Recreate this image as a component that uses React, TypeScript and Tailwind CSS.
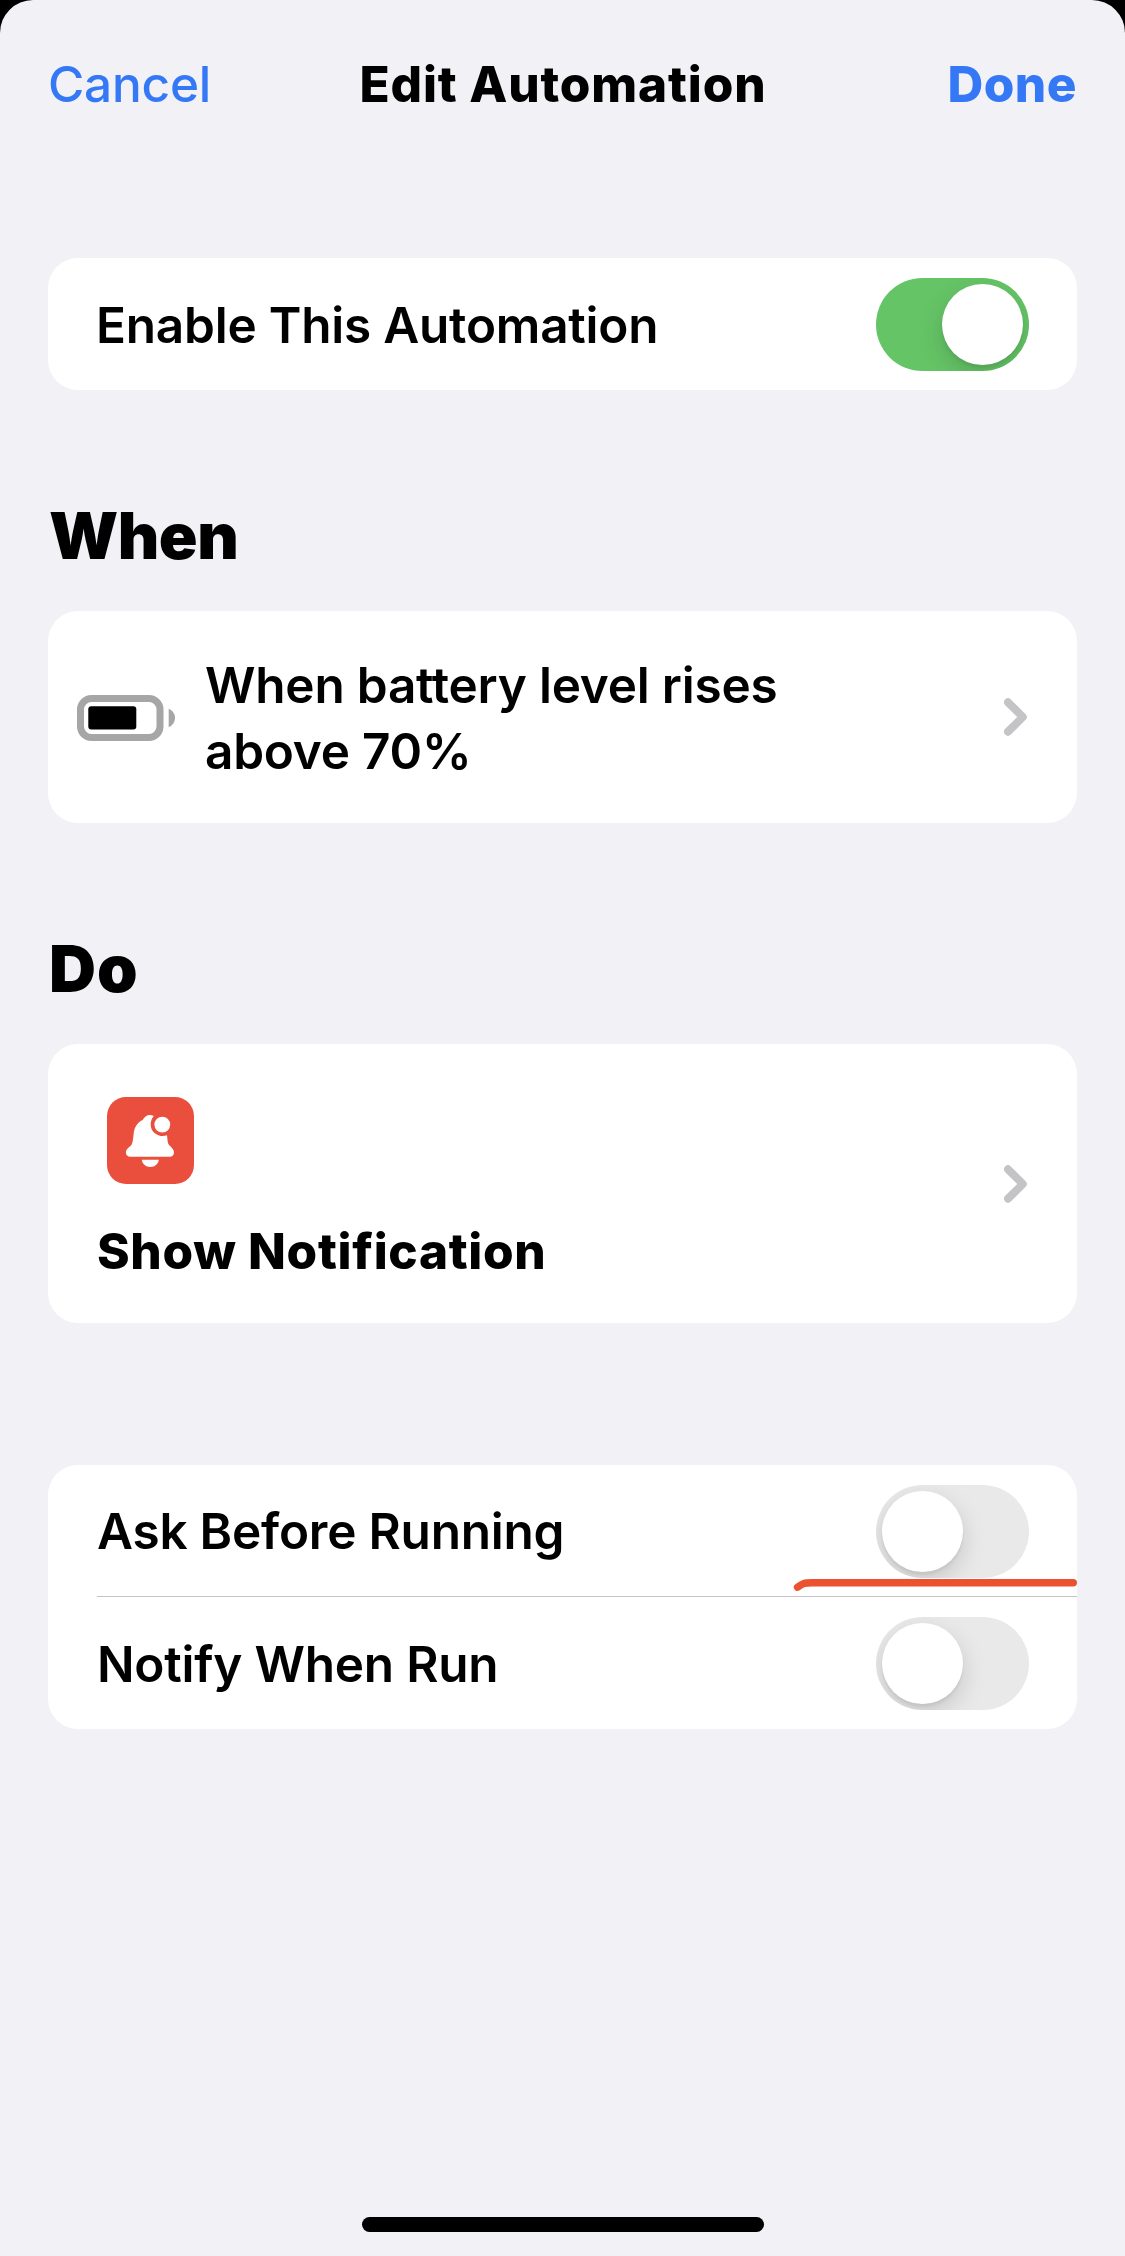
import type { ReactNode } from "react";

function Toggle({ on = false }: { on?: boolean }) {
  return (
    <div
      className={
        on
          ? "flex h-[93px] w-[153px] shrink-0 justify-end overflow-hidden rounded-full bg-[#65c466] p-[6px]"
          : "flex h-[93px] w-[153px] shrink-0 justify-start overflow-hidden rounded-full bg-[#e9e9ea] p-[6px]"
      }
    >
      <div className="size-[81px] rounded-full bg-white shadow-[0_9px_24px_rgba(0,0,0,0.15),0_3px_3px_rgba(0,0,0,0.06)]" />
    </div>
  );
}

function Chevron() {
  return (
    <svg className="h-[40px] w-[25px] shrink-0" viewBox="0 0 25 40" fill="none">
      <path d="M4 5.3 18.800 20 4 34.700" stroke="#c4c4c6" strokeWidth="8" strokeLinecap="round" strokeLinejoin="round" />
    </svg>
  );
}

function Card({ className, children }: { className: string; children: ReactNode }) {
  return <div className={`rounded-[30px] bg-white ${className}`}>{children}</div>;
}

function BatteryIcon() {
  return (
    <svg className="mt-[2px] h-[48px] w-[99px] shrink-0" viewBox="0 0 99 48">
      <rect x="3.5" y="4.5" width="79.5" height="39" rx="11" fill="none" stroke="#a6a6a6" strokeWidth="7" />
      <rect x="11.3" y="12.2" width="48" height="23.4" rx="3" fill="#000" />
      <path d="M91.7 14.8c3.8 1.6 6.300 5.300 6.300 9.200s-2.500 7.600-6.300 9.200z" fill="#a6a6a6" />
    </svg>
  );
}

function NotificationIcon() {
  return (
    <svg className="size-[87px]" viewBox="0 0 87 87">
      <rect width="87" height="87" rx="19" fill="#ea4f3d" />
      <path
        d="M46.800 18.900C45.500 18.300 44.200 18 42.900 18c-3.200 0-5.700 2-7.300 5.100-5.300 2.500-8.100 7-8.900 13.100-.5 4-.5 8.400-2.200 11.600-1.800 2.600-5.600 4-5.600 7.800 0 2.400 1.700 4.200 4.400 4.200h39.300c2.700 0 4.400-1.800 4.400-4.200 0-3.800-3.600-5.800-5.500-8.300-1.100-2.300-1-5.600-1.500-9.100-6.500 2.600-16.300-1.500-16.300-10.800 0-3.200 1.200-6.400 3.100-8.500z"
        fill="#fff"
      />
      <circle cx="55.300" cy="27.600" r="7.900" fill="#fff" />
      <path d="M34.800 62.800h17c-.3 4-3.900 7.200-8.500 7.200s-8.200-3.200-8.500-7.200z" fill="#fff" />
    </svg>
  );
}

export default function App() {
  return (
    <div className="h-[2256px] w-[1125px] bg-black">
      <div className="flex h-full flex-col rounded-t-[33px] bg-[#f1f1f6] px-[48px] font-[Inter,sans-serif] text-[49.5px] font-[570] tracking-[-0.22px] text-black">
        <header className="grid h-[168px] grid-cols-[1fr_auto_1fr] items-center">
          <button className="justify-self-start font-[540] text-[#3478f6]">Cancel</button>
          <h1 className="pl-[1px] font-[850] tracking-[0.85px]">Edit Automation</h1>
          <button className="justify-self-end font-[850] tracking-[0.5px] text-[#3478f6]">Done</button>
        </header>

        <Card className="mt-[90px] flex h-[132px] items-center justify-between px-[48px] pt-[1px]">
          <span className="pt-[1px]">Enable This Automation</span>
          <Toggle on />
        </Card>

        <h2 className="mt-[106px] h-[80px] pl-[1px] text-[64px] leading-[80px] font-black tracking-[-0.5px]">When</h2>
        <Card className="mt-[35px] flex h-[212px] items-center pr-[48px] pl-[29px]">
          <BatteryIcon />
          <span className="ml-[29px] w-[640px] pt-[2px] leading-[66px]">When battery level rises above 70%</span>
          <div className="ml-auto flex">
            <Chevron />
          </div>
        </Card>

        <h2 className="mt-[106px] h-[80px] pl-[1px] text-[65px] leading-[80px] font-black tracking-[1px]">Do</h2>
        <Card className="mt-[35px] flex h-[279px] items-center justify-between px-[48px]">
          <div className="flex h-full flex-col pt-[53px]">
            <div className="pl-[11px]">
              <NotificationIcon />
            </div>
            <span className="mt-[34px] pl-[1px] leading-[66px] font-[850] tracking-[0.66px]">Show Notification</span>
          </div>
          <Chevron />
        </Card>

        <Card className="relative mt-[142px] flex h-[264px] flex-col pl-[49px]">
          <div className="flex h-[132px] items-center justify-between border-b border-[#c4c4c6] pt-[2px] pr-[48px]">
            <span>Ask Before Running</span>
            <Toggle />
          </div>
          <div className="flex h-[132px] items-center justify-between pt-[1px] pr-[48px]">
            <span className="pt-[1px]">Notify When Run</span>
            <Toggle />
          </div>
          <svg className="absolute top-[106px] right-0 h-[24px] w-[290px]" viewBox="0 0 290 24" fill="none">
            <path d="M10.500 16.200C16 12.500 17 11.800 25 11.800H286.300" stroke="#ec5130" strokeWidth="7.400" strokeLinecap="round" strokeLinejoin="round" />
          </svg>
        </Card>

        <div className="mt-auto mb-[24px] h-[15px] w-[402px] self-center rounded-full bg-black" />
      </div>
    </div>
  );
}
